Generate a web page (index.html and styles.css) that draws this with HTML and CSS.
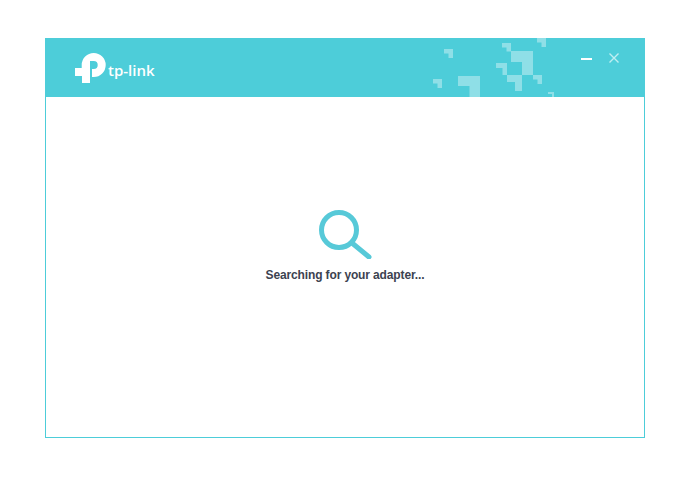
FILE: index.html
```html
<!DOCTYPE html>
<html lang="en">
<head>
<meta charset="utf-8">
<title>TP-Link</title>
<link rel="stylesheet" href="styles.css">
</head>
<body>
<main class="window">
  <header class="titlebar">
    <svg class="pattern" width="600" height="59" viewBox="45 38 600 59" aria-hidden="true">
      <path d="M444 49h9v9h-4.500v-4.500h-4.500zM502 43h9v8.500h-4.500v-4h-4.500zM537 38h9v9h-4.500v-4.500h-4.500zM511 51h22v24h-11v-13h-11zM496 63h11v12h-4.500v-7h-6.500zM507 75h15v16h-7v-9h-8zM533 75h9v9h-4.500v-4.500h-4.500zM458 76h22v21h-10.500v-11h-11.500zM433 79h9v9h-4.500v-4.500h-4.500zM548 92h6v5h-2v-3h-4z"/>
    </svg>
    <div class="brand">
      <svg class="brand-mark" width="31" height="30" viewBox="0 0 31 30" aria-hidden="true">
        <path d="M7 15H0v8h7v7h8V8h3.700a4 4 0 0 1 0 8H17v8h1.700a12 12 0 0 0 0-24a12 12 0 0 0-12 12v3z"/>
      </svg>
      <span class="brand-name">tp-link</span>
    </div>
    <div class="controls">
      <span class="minimize"></span>
      <svg class="close" width="10" height="10" viewBox="0 0 10 10" aria-hidden="true"><path d="M.5.5l9 9M9.500.5l-9 9"/></svg>
    </div>
  </header>
  <section class="content">
    <svg class="search" width="54" height="50" viewBox="0 0 54 50" aria-hidden="true">
      <circle cx="20" cy="21" r="17.500"/>
      <path d="M33 34l17 14"/>
    </svg>
    <p class="status">Searching for your adapter...</p>
  </section>
</main>
</body>
</html>
```
FILE: styles.css
```css
html, body { margin: 0; padding: 0; background: #fff; }
body { padding: 38px 45px; font-family: "Liberation Sans", Arial, sans-serif; }
.window { width: 600px; height: 400px; box-sizing: border-box; border: 1px solid #4dcdd9; border-top: 0; display: flex; flex-direction: column; background: #fff; }
.titlebar { position: relative; height: 59px; margin: 0 -1px; background: #4dcdd9; display: flex; align-items: center; justify-content: space-between; flex: none; overflow: hidden; }
.pattern { position: absolute; left: 0; top: 0; }
.pattern path { fill: #8fdfe7; }
.brand { display: flex; align-items: center; gap: 2px; margin-left: 30px; padding-top: 1px; position: relative; }
.brand-mark { fill: #fff; display: block; }
.brand-name { color: #fff; font-family: "Open Sans", sans-serif; font-size: 15px; font-weight: 600; line-height: 20px; padding-top: 3px; }
.controls { position: relative; display: flex; align-items: center; gap: 17px; margin: 0 26px 0 0; padding-bottom: 19px; }
.minimize { width: 11px; height: 2px; margin-top: 2px; background: #fff; display: block; }
.close { display: block; }
.close path { stroke: #bfeef2; stroke-width: 1.4; fill: none; }
.content { flex: 1; display: flex; flex-direction: column; align-items: center; padding-top: 112px; }
.search { display: block; margin-left: 1px; }
.search circle, .search path { fill: none; stroke: #57c9d8; stroke-width: 5; stroke-linecap: round; }
.status { margin: 8px 0 0; font-size: 12px; line-height: 16px; font-weight: 700; color: #3c4250; letter-spacing: -0.13px; }
```
